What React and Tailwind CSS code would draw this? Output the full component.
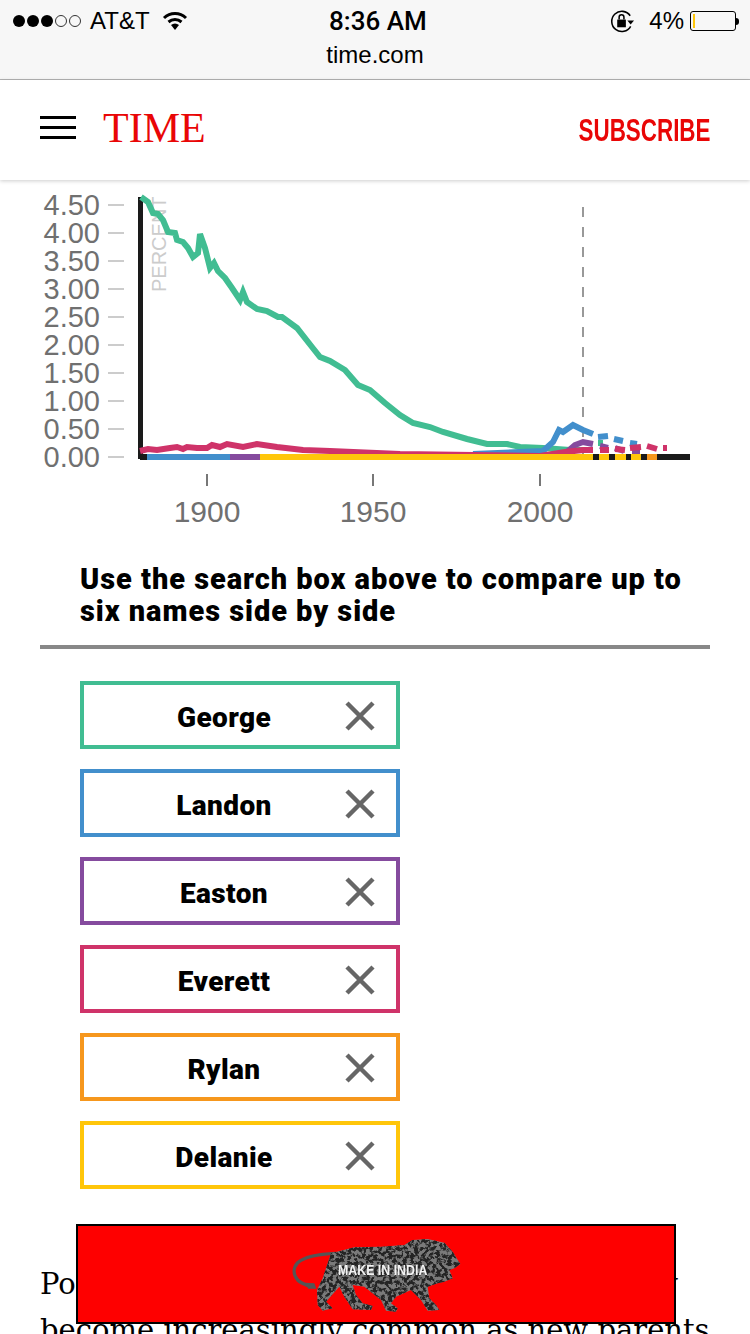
const names = [
  { name: 'George', border: 'border-[#41bd92]' },
  { name: 'Landon', border: 'border-[#428fcc]' },
  { name: 'Easton', border: 'border-[#854b9e]' },
  { name: 'Everett', border: 'border-[#cf3369]' },
  { name: 'Rylan', border: 'border-[#f6971d]' },
  { name: 'Delanie', border: 'border-[#ffc60a]' },
];

const yLabels = ['4.50', '4.00', '3.50', '3.00', '2.50', '2.00', '1.50', '1.00', '0.50', '0.00'];

const green =
  '141,197 148,202 153,213 158,214 163,220 168,232 175,233 177,240 183,242 188,248 193,257 198,253 200,234 205,248 210,268 214,263 218,271 225,278 232,288 240,300 243,292 247,302 257,309 267,311 278,317 282,317 297,328 312,347 320,357 330,361 345,370 358,385 370,390 385,403 400,415 413,423 430,427 443,432 467,439 487,444 507,444 520,447 543,448 570,450 583,450';
const crimson =
  '140,451 148,449 157,450 170,448 177,447 183,449 187,447 197,448 207,448 212,445 220,447 227,444 243,447 257,444 277,447 303,450 330,451 400,454 540,456 565,452 583,450 593,450';
const blue = '473,454 543,451 553,442 559,430 563,432 573,425 583,430 593,434';
const purple = '560,455 567,452 575,445 583,442 593,444';

const blueDashes = ['598,437 608,436', '614,439 623,441', '630,443 637,444'];
const purpleDashes = ['600,446 608,448', '615,448 624,451', '632,451 640,451'];
const crimsonDashes = ['600,450 609,450', '615,449 625,450', '630,448 641,447', '647,446 657,449', '663,448 667,448'];

function Chart() {
  return (
    <svg viewBox="0 180 750 365" className="block w-[750px] h-[365px]">
      {yLabels.map((label, i) => (
        <g key={label}>
          <text x="100" y={205 + i * 28 + 10} textAnchor="end" fontSize="29" fill="#707070" fontFamily="'Liberation Sans', sans-serif">
            {label}
          </text>
          <rect x="108" y={204 + i * 28} width="16" height="2" fill="#ccc" />
        </g>
      ))}

      <text transform="translate(166 292) rotate(-90)" fontSize="20" fill="#ccc" fontFamily="'Liberation Sans', sans-serif">
        PERCENT
      </text>

      <rect x="138" y="197" width="5" height="262" fill="#1a1a1a" />
      <rect x="140" y="454" width="550" height="6" fill="#1a1a1a" />

      <line x1="583" y1="207" x2="583" y2="454" stroke="#999" strokeWidth="2" strokeDasharray="10 10" />

      <polyline points={green} fill="none" stroke="#41bd92" strokeWidth="6" />
      <polyline points="598,443 603,443" fill="none" stroke="#41bd92" strokeWidth="6" />
      <polyline points={blue} fill="none" stroke="#428fcc" strokeWidth="6" />
      {blueDashes.map((p) => (
        <polyline key={p} points={p} fill="none" stroke="#428fcc" strokeWidth="6" />
      ))}
      <polyline points={purple} fill="none" stroke="#854b9e" strokeWidth="6" />
      {purpleDashes.map((p) => (
        <polyline key={p} points={p} fill="none" stroke="#854b9e" strokeWidth="6" />
      ))}
      <polyline points={crimson} fill="none" stroke="#cf3369" strokeWidth="6" />
      {crimsonDashes.map((p) => (
        <polyline key={p} points={p} fill="none" stroke="#cf3369" strokeWidth="6" />
      ))}

      <rect x="147" y="454" width="83" height="6" fill="#428fcc" />
      <rect x="230" y="454" width="30" height="6" fill="#854b9e" />
      <rect x="260" y="454" width="333" height="6" fill="#ffc60a" />
      <rect x="599" y="454" width="10" height="6" fill="#ffc60a" />
      <rect x="615" y="454" width="11" height="6" fill="#ffc60a" />
      <rect x="631" y="454" width="10" height="6" fill="#ffc60a" />
      <rect x="647" y="454" width="10" height="6" fill="#f6971d" />

      {[
        [207, '1900'],
        [373, '1950'],
        [540, '2000'],
      ].map(([x, label]) => (
        <g key={label}>
          <rect x={x - 1} y="474" width="2" height="12" fill="#777" />
          <text x={x} y="522" textAnchor="middle" fontSize="30" fill="#707070" fontFamily="'Liberation Sans', sans-serif">
            {label}
          </text>
        </g>
      ))}
    </svg>
  );
}

function Lion() {
  return (
    <svg viewBox="0 -12 570 252" className="w-[190px] h-[84px]">
      <defs>
        <filter id="mottle" x="0" y="0" width="100%" height="100%" colorInterpolationFilters="sRGB">
          <feTurbulence type="fractalNoise" baseFrequency="0.09" numOctaves="3" seed="7" result="n" />
          <feColorMatrix in="n" type="matrix" values="0 0 0 0 0.14  0 0 0 0 0.14  0 0 0 0 0.14  7 0 0 0 -3" result="spots" />
          <feComposite in="spots" in2="SourceGraphic" operator="in" result="clip" />
          <feMerge result="m">
            <feMergeNode in="SourceGraphic" />
            <feMergeNode in="clip" />
          </feMerge>
          <feGaussianBlur in="m" stdDeviation="1.5" />
        </filter>
        <filter id="soft">
          <feGaussianBlur stdDeviation="1.6" />
        </filter>
      </defs>
      <path
        d="M165 40 C110 42 70 50 50 68 C36 84 36 104 50 120 C60 130 74 134 88 140"
        fill="none"
        stroke="#555"
        strokeWidth="10"
      />
      <path d="M72 128 L100 130 L106 146 L82 146 Z" fill="#555" />
      <path
        fill="#7a7a7a"
        filter="url(#mottle)"
        d="M150 40 L220 22 L300 20 L370 15 L395 0 L440 -3 L490 8 L515 35 L538 72 L520 85 L505 90 L515 115 L490 125 L470 130 L440 140 L445 175 L465 195 L475 210 L440 212 L420 180 L390 150 L345 170 L330 190 L350 205 L345 215 L315 212 L300 180 L250 140 L215 135 L225 165 L245 190 L275 198 L270 210 L215 208 L190 170 L175 140 L135 185 L155 205 L125 212 L110 195 L108 150 L125 115 L140 70 Z"
      />
      <text
        x="305"
        y="104"
        textAnchor="middle"
        fontSize="44"
        fontWeight="700"
        fill="#f2f2f2"
        textLength="268"
        lengthAdjust="spacingAndGlyphs"
        filter="url(#soft)"
        fontFamily="'Liberation Sans', sans-serif"
      >
        MAKE IN INDIA
      </text>
    </svg>
  );
}

export default function App() {
  return (
    <div className="relative w-[750px] h-[1334px] overflow-hidden bg-white font-['Liberation_Sans',sans-serif]">
      {/* Status + url bar */}
      <div className="h-[80px] bg-[#f7f7f7] border-b border-[#b4b4b4] flex flex-col">
        <div className="relative flex items-center justify-between h-[40px] pt-[2px] pl-[13px] pr-[11px] text-[24px] text-black">
          <div className="flex items-center">
            <div className="flex gap-[2px]">
              <span className="w-[12px] h-[12px] rounded-full bg-black" />
              <span className="w-[12px] h-[12px] rounded-full bg-black" />
              <span className="w-[12px] h-[12px] rounded-full bg-black" />
              <span className="w-[12px] h-[12px] rounded-full border border-[#333]" />
              <span className="w-[12px] h-[12px] rounded-full border border-[#333]" />
            </div>
            <span className="ml-[9px]">AT&amp;T</span>
            <svg viewBox="0 0 26 20" className="w-[26px] h-[20px] ml-[12px]">
              <path d="M2 7 A16 16 0 0 1 24 7" fill="none" stroke="#000" strokeWidth="3" />
              <path d="M6.5 11 A10 10 0 0 1 19.5 11" fill="none" stroke="#000" strokeWidth="3" />
              <path d="M9 14 A6 6 0 0 1 17 14 L13 19 Z" fill="#000" />
            </svg>
          </div>
          <span className="absolute left-[329px] text-[26px] font-medium font-['Roboto',sans-serif]">8:36 AM</span>
          <div className="flex items-center">
            <svg viewBox="0 0 26 26" className="w-[25px] h-[25px]">
              <path d="M21 7 A10.5 10.5 0 1 0 21.5 18" fill="none" stroke="#000" strokeWidth="1.6" />
              <path d="M18 12 L25 12 L21.5 16 Z" fill="#000" />
              <rect x="7.5" y="11" width="9" height="8" fill="#000" />
              <path d="M9.5 11 V8.5 A2.5 2.5 0 0 1 14.5 8.5 V11" fill="none" stroke="#000" strokeWidth="1.6" />
            </svg>
            <span className="ml-[14px]">4%</span>
            <div className="ml-[6px] flex items-center">
              <div className="w-[46px] h-[20px] border border-black rounded-[3px] px-[2px] py-[2px] flex">
                <span className="w-[2px] h-full bg-[#ffc60a]" />
              </div>
              <span className="w-[3px] h-[7px] bg-black rounded-r-sm" />
            </div>
          </div>
        </div>
        <div className="text-center text-[24px] leading-[30px] text-black">time.com</div>
      </div>

      {/* Site header */}
      <header className="relative z-10 h-[100px] bg-white shadow-[0_1px_4px_rgba(0,0,0,0.2)] flex items-center justify-between pb-[5px] px-[40px]">
        <div className="flex items-center">
          <div className="flex flex-col gap-[7px] w-[36px]">
            <span className="h-[3px] bg-black" />
            <span className="h-[3px] bg-black" />
            <span className="h-[3px] bg-black" />
          </div>
          <span className="ml-[27px] text-[42px] leading-none text-[#e90606] font-['Liberation_Serif',serif]">TIME</span>
        </div>
        <span className="mt-[5px] text-[32px] font-bold text-[#e90606] origin-right scale-x-[0.7]">SUBSCRIBE</span>
      </header>

      <Chart />

      <h2 className="mt-[18px] pl-[80px] text-[29px] leading-[32px] tracking-[0.95px] font-black text-black whitespace-nowrap font-['Roboto',sans-serif]">
        Use the search box above to compare up to
        <br />
        six names side by side
      </h2>

      <div className="mx-[40px] mt-[18px] h-[4px] bg-[#888]" />

      <ul className="mt-[32px] ml-[80px] flex flex-col gap-[20px]">
        {names.map((n) => (
          <li key={n.name} className={`relative w-[320px] h-[68px] border-4 ${n.border} flex items-center justify-center`}>
            <span className="mt-[6px] text-[28px] tracking-[0.4px] font-black text-black mr-[32px] font-['Roboto',sans-serif]">{n.name}</span>
            <svg viewBox="0 0 30 30" className="absolute right-[21px] top-[16px] w-[30px] h-[30px]">
              <path d="M2 2 L28 28 M28 2 L2 28" stroke="#666" strokeWidth="4.5" />
            </svg>
          </li>
        ))}
      </ul>

      {/* Article text behind the ad */}
      <p className="mt-[72px] mx-[40px] text-[29px] leading-[46px] text-black font-['DejaVu_Serif',serif] whitespace-nowrap">
        Popular names such as Rylan have recently
        <br />
        become increasingly common as new parents
      </p>

      {/* Ad overlay */}
      <div className="absolute left-[76px] top-[1224px] w-[600px] h-[100px] bg-[#fe0000] border-2 border-black flex items-end justify-center pb-[2px]">
        <Lion />
      </div>
    </div>
  );
}
